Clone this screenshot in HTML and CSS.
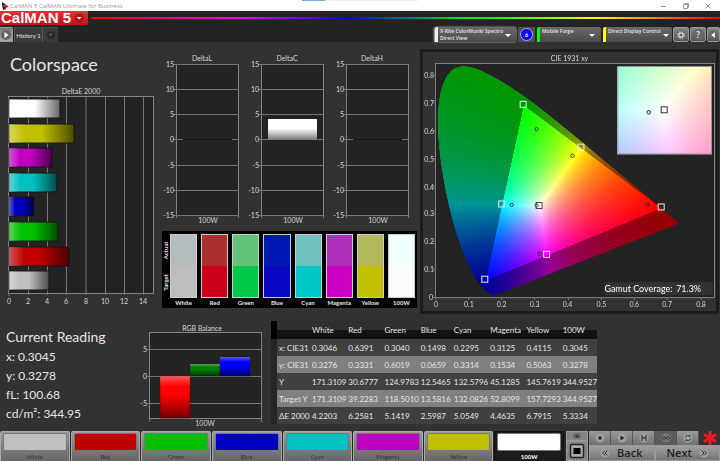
FILE: index.html
```html
<!DOCTYPE html>
<html lang="en">
<head>
    <meta charset="UTF-8">
    <meta name="viewport" content="width=device-width, initial-scale=1.0">
    <title>CalMAN 5 CalMAN Ultimate for Business</title>
    <link rel="stylesheet" href="styles.css">
</head>
<body>

    <div class="titlebar">
        <svg class="app-icon" viewBox="0 0 8 8"><path d="M1 0l3 2-1 2-2-1z" fill="#222"/><path d="M4 2l4 3-4 1-1-2z" fill="#c11"/><path d="M1 3l3 2 1 2-3 1z" fill="#222"/></svg>
        <span class="title">CalMAN 5 CalMAN Ultimate for Business</span>
        <span class="load"></span>
        <div class="win-buttons">
            <button aria-label="Minimize"><svg viewBox="0 0 6 6"><path d="M0 3.5h5"/></svg></button>
            <button aria-label="Restore"><svg viewBox="0 0 6 6"><path d="M.5 1.5h4v4h-4zM1.5 1.5v-1h4v4h-1"/></svg></button>
            <button aria-label="Close"><svg viewBox="0 0 6 6"><path d="M.5.5l5 5M5.5.5l-5 5"/></svg></button>
        </div>
    </div>

    <header>
        <div class="brand-row">
            <button class="brand">CalMAN 5
                <svg viewBox="0 0 10 10"><circle cx="5" cy="5" r="4.5" fill="#b5121a"/><path d="M2.5 4h5L5 6.5z" fill="#fff"/></svg>
            </button>
            <div class="rainbow"></div>
        </div>
        <div class="tab-row">
            <button class="play" aria-label="Play"><svg viewBox="0 0 12 12"><circle cx="6" cy="6" r="5" fill="#666"/><path d="M4.5 3l4 3-4 3z" fill="#fff"/></svg></button>
            <button class="tab">History 1</button>
            <button class="tab add"><span>+</span></button>
            <div class="devices">
                <button class="device meter"><span>X-Rite ColorMunki Spectro<br>Direct View</span><i></i></button>
                <button class="badge" aria-label="Six"><b>6</b></button>
                <button class="device source"><span>Mobile Forge</span><i></i></button>
                <button class="device display"><span>Direct Display Control</span><i></i></button>
                <button class="tool" aria-label="Settings"><svg viewBox="0 0 12 12"><circle cx="6" cy="6" r="5" fill="#666"/><circle cx="6" cy="6" r="2.2" fill="none" stroke="#ddd" stroke-width="1.2"/><circle cx="6" cy="6" r="3.4" fill="none" stroke="#ddd" stroke-dasharray="1.3 1.4"/></svg></button>
                <button class="tool" aria-label="Help"><b>?</b></button>
                <button class="tool last" aria-label="Collapse"><svg viewBox="0 0 12 12"><circle cx="6" cy="6" r="5" fill="#666"/><path d="M7.5 3l-4 3 4 3z" fill="#fff"/></svg></button>
            </div>
        </div>
    </header>

    <main>
        <div class="top">
            <section class="delta-e">
                <h1>Colorspace</h1>
                <svg viewBox="0 0 160 225">
                    <defs>
                        <linearGradient id="tube">
                            <stop offset="0" stop-color="#fff" stop-opacity=".35"/>
                            <stop offset=".25" stop-color="#fff" stop-opacity="0"/>
                            <stop offset=".5" stop-color="#000" stop-opacity="0"/>
                            <stop offset="1" stop-color="#000" stop-opacity=".6"/>
                        </linearGradient>
                    </defs>
                    <text x="81" y="9" class="mid">DeltaE 2000</text>
                    <rect x="8.5" y="11.5" width="145" height="197" class="plot"/>
                    <path class="grid" d="M28.5 12v198M47.5 12v198M66.5 12v198M86 12v198M105.5 12v198M124.5 12v198M143.5 12v198M9 208v3"/>
                    <g class="bars">
                        <rect x="9" y="14" width="51" height="19" fill="#fff"/>
                        <rect x="9" y="39" width="65" height="19" fill="#c0c000"/>
                        <rect x="9" y="63" width="43" height="19" fill="#c000c0"/>
                        <rect x="9" y="88" width="48" height="19" fill="#00c0c0"/>
                        <rect x="9" y="112" width="25" height="19" fill="#0000c0"/>
                        <rect x="9" y="137" width="49" height="19" fill="#00c000"/>
                        <rect x="9" y="162" width="60" height="19" fill="#c00000"/>
                        <rect x="9" y="186" width="40" height="19" fill="#c0c0c0"/>
                    </g>
                    <g fill="url(#tube)">
                        <rect x="9" y="14" width="51" height="19"/>
                        <rect x="9" y="39" width="65" height="19"/>
                        <rect x="9" y="63" width="43" height="19"/>
                        <rect x="9" y="88" width="48" height="19"/>
                        <rect x="9" y="112" width="25" height="19"/>
                        <rect x="9" y="137" width="49" height="19"/>
                        <rect x="9" y="162" width="60" height="19"/>
                        <rect x="9" y="186" width="40" height="19"/>
                    </g>
                    <g class="mid">
                        <text x="9" y="219">0</text><text x="28" y="219">2</text><text x="47" y="219">4</text><text x="66" y="219">6</text>
                        <text x="86" y="219">8</text><text x="105" y="219">10</text><text x="124" y="219">12</text><text x="143" y="219">14</text>
                    </g>
                </svg>
            </section>

            <section class="center">
                <svg viewBox="0 0 260 177">
                    <defs>
                        <linearGradient id="fade" x2="0" y2="1">
                            <stop offset=".45" stop-color="#fff"/>
                            <stop offset="1" stop-color="#777"/>
                        </linearGradient>
                        <g id="axes">
                            <rect x="16.5" y="14.5" width="62" height="151" class="plot"/>
                            <path class="grid" d="M13 14.5h66M13 39.5h66M13 64.5h66M13 89.5h10M72 89.5h7M13 115.5h66M13 140.5h66M13 165.5h66M16.5 165v3M78.5 165v3"/>
                            <path d="M23 89.5h49" stroke="#151515"/>
                            <g class="end">
                                <text x="14" y="17">15</text><text x="14" y="42">10</text><text x="14" y="67">5</text><text x="14" y="92">0</text>
                                <text x="14" y="118">-5</text><text x="14" y="143">-10</text><text x="14" y="168">-15</text>
                            </g>
                            <text x="48" y="173" class="mid">100W</text>
                        </g>
                    </defs>
                    <use href="#axes"/>
                    <use href="#axes" x="85"/>
                    <use href="#axes" x="170"/>
                    <rect x="108" y="69" width="49" height="21" fill="url(#fade)"/>
                    <g class="mid"><text x="42" y="11">DeltaL</text><text x="127" y="11">DeltaC</text><text x="212" y="11">DeltaH</text></g>
                </svg>
                <div class="swatches">
                    <div class="side"><span>Actual</span><span>Target</span></div>
                    <figure class="s-white"><div></div><figcaption>White</figcaption></figure>
                    <figure class="s-red"><div></div><figcaption>Red</figcaption></figure>
                    <figure class="s-green"><div></div><figcaption>Green</figcaption></figure>
                    <figure class="s-blue"><div></div><figcaption>Blue</figcaption></figure>
                    <figure class="s-cyan"><div></div><figcaption>Cyan</figcaption></figure>
                    <figure class="s-magenta"><div></div><figcaption>Magenta</figcaption></figure>
                    <figure class="s-yellow"><div></div><figcaption>Yellow</figcaption></figure>
                    <figure class="s-100w"><div></div><figcaption>100W</figcaption></figure>
                </div>
            </section>

            <section class="cie">
                <canvas id="gamut" width="882" height="780"></canvas>
                <svg viewBox="0 0 294 260">
                    <text x="147" y="9" class="mid">CIE 1931 xy</text>
                    <rect x="12.5" y="11.5" width="280" height="235" fill="none" stroke="#858585"/>
                    <path class="grid" d="M10 23h3M10 51h3M10 79h3M10 107h3M10 135h3M10 162.5h3M10 190.5h3M10 218.5h3M10 246.5h3M13 246v3M46 246v3M79 246v3M112 246v3M146 246v3M179 246v3M212 246v3M245 246v3M279 246v3"/>
                    <g class="end">
                        <text x="11" y="26">0.8</text><text x="11" y="54">0.7</text><text x="11" y="82">0.6</text><text x="11" y="110">0.5</text>
                        <text x="11" y="138">0.4</text><text x="11" y="165">0.3</text><text x="11" y="193">0.2</text><text x="11" y="221">0.1</text><text x="10" y="249">0</text>
                    </g>
                    <g class="mid">
                        <text x="13" y="256">0</text><text x="46" y="256">0.1</text><text x="79" y="256">0.2</text><text x="112" y="256">0.3</text><text x="145" y="256">0.4</text>
                        <text x="179" y="256">0.5</text><text x="212" y="256">0.6</text><text x="245" y="256">0.7</text><text x="279" y="256">0.8</text>
                    </g>
                    <g class="target">
                        <rect x="97.5" y="49.500" width="6" height="6"/>
                        <rect x="155.5" y="92.500" width="6" height="6"/>
                        <rect x="76" y="149.500" width="6" height="6"/>
                        <rect x="236" y="152.500" width="6" height="6"/>
                        <rect x="121" y="200" width="6" height="6"/>
                        <rect x="59" y="225" width="6" height="6"/>
                    </g>
                    <rect x="113.500" y="151" width="6" height="6" fill="#fff" stroke="#444"/>
                    <g class="measured">
                        <circle cx="114" cy="77.5" r="1.7"/>
                        <circle cx="150" cy="104" r="1.7"/>
                        <circle cx="89" cy="153.5" r="1.7"/>
                        <circle cx="114" cy="154" r="1.7" fill="#ccc"/>
                        <circle cx="225.5" cy="153" r="1.7"/>
                        <circle cx="117" cy="202.5" r="1.7"/>
                    </g>
                    <rect x="195.5" y="14.5" width="94" height="88" fill="none" stroke="#999"/>
                    <rect x="239" y="55" width="6" height="6" fill="#fff" stroke="#333"/>
                    <circle cx="226.5" cy="60.5" r="1.8" fill="#ddd" stroke="#333"/>
                    <rect x="182" y="231" width="109" height="13" fill="#323232"/>
                    <text x="182" y="241" class="coverage">Gamut Coverage:</text>
                    <text x="254" y="241" class="coverage">71.3%</text>
                </svg>
            </section>
        </div>

        <div class="bottom">
            <section class="reading">
                <h2>Current Reading</h2>
                <p>x: 0.3045</p>
                <p>y: 0.3278</p>
                <p>fL: 100.68</p>
                <p>cd/m²: 344.95</p>
            </section>

            <section class="balance">
                <svg viewBox="0 0 125 108">
                    <defs>
                        <linearGradient id="block" x2="0" y2="1">
                            <stop offset="0" stop-color="#fff" stop-opacity=".35"/>
                            <stop offset=".25" stop-color="#fff" stop-opacity="0"/>
                            <stop offset=".45" stop-color="#000" stop-opacity="0"/>
                            <stop offset="1" stop-color="#000" stop-opacity=".55"/>
                        </linearGradient>
                    </defs>
                    <text x="57" y="8" class="mid">RGB Balance</text>
                    <rect x="4.5" y="9.5" width="112" height="86" class="plot"/>
                    <path class="grid" d="M2 26.5h115M2 53.5h115M2 80.5h115M4.5 96v3M116.5 96v3"/>
                    <g stroke="#222" stroke-width=".5">
                        <rect x="15" y="53" width="30" height="42" fill="#f00"/>
                        <rect x="45" y="41" width="30" height="12" fill="#008000"/>
                        <rect x="75" y="34" width="30" height="19" fill="#00f"/>
                    </g>
                    <g fill="url(#block)"><rect x="15" y="53" width="30" height="42"/><rect x="45" y="41" width="30" height="12"/><rect x="75" y="34" width="30" height="19"/></g>
                    <g class="end"><text x="2" y="29">5</text><text x="2" y="56">0</text><text x="2" y="83">-5</text></g>
                    <text x="60" y="103" class="mid">100W</text>
                </svg>
            </section>

            <section class="readings">
                <table>
                    <thead>
                        <tr><th class="gutter"></th><th class="label"></th><th>White</th><th>Red</th><th>Green</th><th class="narrow">Blue</th><th>Cyan</th><th>Magenta</th><th>Yellow</th><th>100W</th></tr>
                    </thead>
                    <tbody>
                        <tr><td class="gutter"></td><th>x: CIE31</th><td>0.3046</td><td>0.6391</td><td>0.3040</td><td>0.1498</td><td>0.2295</td><td>0.3125</td><td>0.4115</td><td>0.3045</td></tr>
                        <tr><td class="gutter"></td><th>y: CIE31</th><td>0.3276</td><td>0.3331</td><td>0.6019</td><td>0.0659</td><td>0.3314</td><td>0.1534</td><td>0.5063</td><td>0.3278</td></tr>
                        <tr><td class="gutter"></td><th>Y</th><td>171.3109</td><td>30.6777</td><td>124.9783</td><td>12.5465</td><td>132.5796</td><td>45.1285</td><td>145.7619</td><td>344.9527</td></tr>
                        <tr><td class="gutter"></td><th>Target Y</th><td>171.3109</td><td>39.2283</td><td>118.5010</td><td>13.5816</td><td>132.0826</td><td>52.8099</td><td>157.7293</td><td>344.9527</td></tr>
                        <tr><td class="gutter"></td><th>ΔE 2000</th><td>4.2203</td><td>6.2581</td><td>5.1419</td><td>2.5987</td><td>5.0549</td><td>4.4635</td><td>6.7915</td><td>5.3334</td></tr>
                    </tbody>
                </table>
            </section>
        </div>
    </main>

    <footer>
        <div class="patches">
            <button class="p-white"><i></i>White</button>
            <button class="p-red"><i></i>Red</button>
            <button class="p-green"><i></i>Green</button>
            <button class="p-blue"><i></i>Blue</button>
            <button class="p-cyan"><i></i>Cyan</button>
            <button class="p-magenta"><i></i>Magenta</button>
            <button class="p-yellow"><i></i>Yellow</button>
            <button class="p-100w active"><i></i>100W</button>
        </div>
        <div class="window-tools">
            <button aria-label="Expand"><svg viewBox="0 0 10 8"><ellipse cx="5" cy="4" rx="4" ry="3" fill="#666"/><path d="M3 5L5 3 7 5z" fill="#222"/></svg></button>
            <button aria-label="Pattern window"><svg viewBox="0 0 16 16"><rect x="1.5" y="1.5" width="13" height="13" rx="1" fill="#aaa" stroke="#222" stroke-width="1.5"/><rect x="4.5" y="5" width="7" height="6"/></svg></button>
        </div>
        <div class="transport">
            <div class="controls">
                <button aria-label="Stop"><svg viewBox="0 0 10 10"><circle cx="5" cy="5" r="4.5"/><path d="M3.5 3.5h3v3h-3z"/></svg></button>
                <button aria-label="Read"><svg viewBox="0 0 10 10"><circle cx="5" cy="5" r="4.5"/><path d="M3.5 2.5L7.5 5l-4 2.5z"/></svg></button>
                <button aria-label="Read series"><svg viewBox="0 0 10 10"><circle cx="5" cy="5" r="4.5"/><path d="M2.5 2h1v6h-1zM6.5 2h1v6h-1zM3.5 4.5h3v1h-3z"/></svg></button>
                <button class="on" aria-label="Read continuous"><svg viewBox="0 0 10 10"><circle cx="5" cy="5" r="4.5"/><path class="line" d="M5 5C3.5 3 1.5 3.500 1.5 5s2 2 3.500 0 3.500-1.500 3.500 0-2 2-3.500 0z"/></svg></button>
                <button aria-label="Refresh"><svg viewBox="0 0 10 10"><circle cx="5" cy="5" r="4.5"/><path class="line" d="M2.5 4.5a2.5 2.5 0 0 1 4.5-1V2M7.5 5.5a2.5 2.5 0 0 1-4.5 1V8"/></svg></button>
                <svg class="star" viewBox="0 0 14 14"><path d="M7 0v14M1 3.5l12 7M13 3.5l-12 7"/></svg>
            </div>
            <div class="nav">
                <button><svg viewBox="0 0 10 10"><circle cx="5" cy="5" r="4.5"/><path class="line" d="M5 2.5L2.5 5 5 7.5M7.5 2.5L5 5l2.5 2.5"/></svg>Back</button>
                <button>Next<svg viewBox="0 0 10 10"><circle cx="5" cy="5" r="4.5"/><path class="line" d="M5 2.5L7.5 5 5 7.5M2.5 2.5L5 5 2.5 7.5"/></svg></button>
            </div>
        </div>
    </footer>

    <script src="gamut.js"></script>
</body>
</html>
```
FILE: styles.css
```css
* {
    box-sizing: border-box;
}
body {
    margin: 0;
    min-height: 100vh;
    display: flex;
    flex-direction: column;
    background: #323232;
    color: #e6e6e6;
    font-family: Lato, sans-serif;
    font-size: 8px;
}
button {
    font-family: inherit;
    font-size: 7px;
    color: inherit;
    border: none;
    padding: 0;
    cursor: pointer;
}
svg {
    display: block;
}

/* window title */
.titlebar {
    height: 11px;
    background: #fff;
    color: #999;
    display: flex;
    align-items: center;
    padding: 0 9px 0 1px;
    font-family: "Open Sans", sans-serif;
    font-size: 6px;
    position: relative;
}
.app-icon {
    width: 8px;
    height: 8px;
    margin-right: 1px;
}
.load {
    position: absolute;
    left: 42%;
    top: 0;
    width: 16%;
    height: 1px;
    background: linear-gradient(90deg, #7aaae0 20%, #eee 20%);
}
.win-buttons {
    margin-left: auto;
    display: flex;
    gap: 16px;
}
.win-buttons button {
    background: none;
}
.win-buttons svg {
    width: 6px;
    height: 6px;
    fill: none;
    stroke: #999;
}

/* header */
header {
    height: 31px;
    background: #232323;
    display: flex;
    flex-direction: column;
    justify-content: space-between;
}
.brand-row {
    display: flex;
    align-items: flex-start;
    height: 14px;
}
.brand {
    width: 88px;
    height: 14px;
    background: linear-gradient(#e33138, #c4121a);
    border-radius: 0 0 2px 0;
    color: #fff;
    font: bold 15px/12px "Liberation Sans", sans-serif;
    display: flex;
    align-items: center;
    justify-content: space-between;
    padding: 0 4px 1px 1px;
    white-space: nowrap;
}
.brand svg {
    width: 10px;
    height: 10px;
}
.rainbow {
    flex: 1;
    height: 2px;
    margin: 6px 0 0 3px;
    background: linear-gradient(90deg, #f00, #f0f 24%, #00f 41%, #00e020 58%, #0f0 64%, #ff0 80%, #f00);
}
.tab-row {
    display: flex;
    height: 15px;
}
.play {
    width: 13px;
    background: linear-gradient(#777, #aaa);
    border: 1px solid #999;
    border-left: 0;
    border-radius: 0 2px 0 0;
}
.play svg {
    width: 12px;
    height: 12px;
}
.tab {
    width: 28px;
    background: #3a3a3a;
    border-left: 1px solid #555;
    border-top: 1px solid #4a4a4a;
    margin-left: 1px;
    white-space: nowrap;
    font-size: 6px;
}
.tab.add {
    width: 16px;
    margin: 0;
    color: #888;
}
.tab.add span {
    display: block;
    width: 8px;
    line-height: 8px;
    margin: auto;
    background: #2a2a2a;
    border-radius: 50%;
}
.devices {
    margin-left: auto;
    display: flex;
    gap: 1px;
}
.device {
    display: flex;
    justify-content: space-between;
    align-items: flex-start;
    text-align: left;
    background: linear-gradient(#6a6a6a, #4a4a4a);
    border-left: 3px solid #eee;
    border-radius: 2px 2px 0 0;
    padding: 1px 6px 0 2px;
    font-family: "Open Sans", sans-serif;
    font-size: 5px;
    font-weight: 600;
    line-height: 7px;
    white-space: nowrap;
}
.device i {
    align-self: center;
    border: 3px solid transparent;
    border-top-color: #fff;
    border-bottom: 0;
}
.meter {
    width: 82px;
    box-shadow: -1px 0 2px #ccc;
}
.source {
    width: 64px;
    border-left-color: #0f0;
    margin-left: 1px;
}
.display {
    width: 69px;
    border-left-color: #ff0;
    margin-left: 1px;
    padding-right: 3px;
}
.badge {
    width: 17px;
    background: #505050;
}
.badge b {
    display: block;
    width: 13px;
    margin: auto;
    line-height: 11px;
    border: 1px solid #aac;
    border-radius: 50%;
    background: #00f;
    color: #fff;
    font-size: 6px;
}
.tool {
    width: 16px;
    background: linear-gradient(#888, #555);
    border: 1px solid #999;
    border-radius: 2px;
}
.tool.last {
    width: 13px;
}
.tool svg {
    width: 12px;
    height: 12px;
    margin: auto;
}
.tool.last svg {
    width: 11px;
}
.tool b {
    display: block;
    width: 11px;
    margin: auto;
    line-height: 11px;
    background: #666;
    border-radius: 50%;
    font-size: 9px;
}

/* charts */
main {
    flex: 1;
}
main svg {
    width: 100%;
    overflow: visible;
    font-size: 7px;
    fill: #d6d6d6;
}
.mid {
    text-anchor: middle;
}
.end {
    text-anchor: end;
}
.plot {
    fill: #232323;
    stroke: #858585;
}
.grid {
    fill: none;
    stroke: #767676;
}
.bars {
    stroke: #1a1a1a;
}
.top {
    display: grid;
    grid-template-columns: 160fr 260fr 300fr;
}
h1, h2 {
    margin: 0;
    font-weight: normal;
    white-space: nowrap;
}
h1 {
    font-size: 18px;
    line-height: 24px;
    padding: 10px 0 9px 10px;
}
.center {
    padding-top: 8px;
}
.swatches {
    display: flex;
    gap: 4px;
    height: 77px;
    background: #000;
    margin: 4px 3px 0 2px;
    padding: 3px 2px 0 1px;
    font-weight: bold;
    font-size: 6px;
}
.side {
    width: 6px;
    margin-right: -3px;
    height: 64px;
    display: flex;
    flex-direction: column;
    justify-content: space-around;
}
.side span {
    writing-mode: vertical-rl;
    transform: rotate(180deg);
    line-height: 6px;
    text-align: center;
}
.swatches figure {
    flex: 1;
    min-width: 0;
    margin: 0;
    text-align: center;
}
.swatches figure div {
    height: 64px;
    border: 1px solid #ccc;
}
.swatches figcaption {
    line-height: 9px;
}
.s-white div { background: linear-gradient(#b3bcbf 50%, #bdbdbd 50%); }
.s-red div { background: linear-gradient(#ad3030 50%, #cc001b 50%); }
.s-green div { background: linear-gradient(#62c478 50%, #00c848 50%); }
.s-blue div { background: linear-gradient(#0019b5 50%, #0909c4 50%); }
.s-cyan div { background: linear-gradient(#70c0bd 50%, #00c8c8 50%); }
.s-magenta div { background: linear-gradient(#b02dba 50%, #cc00c4 50%); }
.s-yellow div { background: linear-gradient(#b3b95a 50%, #c0c000 50%); }
.s-100w div { background: linear-gradient(#f2ffff 50%, #fcfcfc 50%); }

.cie {
    display: grid;
    margin: 7px 1px 0 0;
    border: 3px solid #1c1c1c;
    align-self: start;
}
.cie canvas, .cie svg {
    grid-area: 1 / 1;
    width: 100%;
}
.target rect {
    fill: none;
    stroke: #eee;
}
.measured circle {
    fill: none;
    stroke: #222;
    stroke-opacity: 0.8;
}
.cie .coverage {
    font-size: 9px;
    fill: #fff;
}

/* readings */
.bottom {
    display: grid;
    grid-template-columns: 145fr 125fr 327fr 123fr;
}
.reading {
    padding: 13px 0 0 6px;
}
h2 {
    font-size: 14px;
    line-height: 20px;
}
.reading p {
    margin: 0;
    font-size: 12px;
    line-height: 19px;
    white-space: nowrap;
}
.balance {
    padding-top: 9px;
}
.readings {
    padding: 7px 0 0 1px;
}
table {
    width: 100%;
    table-layout: fixed;
    border-collapse: collapse;
    background: #404040;
    font-size: 8px;
    white-space: nowrap;
}
th, td {
    height: 17px;
    padding: 0 0 0 2px;
    text-align: left;
    font-weight: normal;
}
thead th {
    height: 18px;
    background: linear-gradient(#303030 50%, #121212 50%);
}
.gutter {
    width: 6px;
    background: #262626;
    padding: 0;
}
thead .gutter {
    background: #000;
}
.label {
    width: 33px;
}
.narrow {
    width: 33px;
}
tbody tr:nth-child(even) {
    background: #808080;
}

/* bottom bar */
footer {
    height: 30px;
    display: flex;
    background: #262626;
}
.patches {
    flex: 1;
    display: flex;
    gap: 1px;
}
.patches button {
    flex: 1;
    background: linear-gradient(#999, #666);
    border: 1px solid #aaa;
    border-bottom: 0;
    border-radius: 2px 2px 0 0;
    padding: 1px 2px 0;
    color: #333;
    font-size: 6px;
    line-height: 8px;
}
.patches i {
    display: block;
    height: 18px;
    border-radius: 2px;
    border: 1px solid #777;
    margin-bottom: 2px;
}
.patches .active {
    background: #1c1c1c;
    border-color: #111;
    color: #fff;
    font-weight: bold;
}
.p-white i { background: #c0c0c0; }
.p-red i { background: #c00000; }
.p-green i { background: #00c000; }
.p-blue i { background: #0000c0; }
.p-cyan i { background: #00c0c0; }
.p-magenta i { background: #c000c0; }
.p-yellow i { background: #c0c000; }
.p-100w i { background: #fff; }
.window-tools {
    width: 22px;
    margin: 0 1px 0 2px;
    display: flex;
    flex-direction: column;
}
.window-tools button {
    background: #858585;
    border: 1px solid #999;
    height: 10px;
}
.window-tools button + button {
    height: 20px;
}
.window-tools svg {
    width: 16px;
    height: 16px;
    margin: auto;
}
.window-tools button:first-child svg {
    height: 8px;
}
.transport {
    width: 131px;
    display: flex;
    flex-direction: column;
}
.controls {
    display: flex;
    height: 14px;
    background: #323232;
}
.controls button {
    width: 22px;
    background: linear-gradient(#999, #707070);
    border-right: 1px solid #555;
}
.controls .on {
    background: #5c5c5c;
}
.transport svg {
    width: 10px;
    height: 10px;
    margin: auto;
    fill: #222;
}
.transport circle {
    fill: #a0a0a0;
}
.transport .on circle {
    fill: #777;
}
.transport .line {
    fill: none;
    stroke: #333;
}
.controls .star {
    width: 14px;
    height: 14px;
    margin: 0 auto;
    stroke: #f01820;
    stroke-width: 3;
}
.nav {
    flex: 1;
    display: flex;
}
.nav button {
    flex: 1;
    display: flex;
    align-items: center;
    background: linear-gradient(#a0a0a0, #747474);
    border: 1px solid #999;
    color: #222;
    font-family: "Open Sans", sans-serif;
    font-size: 11px;
    font-weight: 600;
    line-height: 14px;
    padding: 0 11px 0 3px;
}
.nav button + button {
    padding: 0 3px 0 11px;
}
```
FILE: gamut.js
```js
// spectral locus, CIE 1931 2 degree observer
const locus = [
    [.1741, .005], [.1714, .0051], [.1644, .0109], [.1566, .0177], [.144, .0297], [.1241, .0578],
    [.1096, .0868], [.0913, .1327], [.0687, .2007], [.0454, .295], [.0235, .4127], [.0082, .5384],
    [.0039, .6548], [.0139, .7502], [.0389, .812], [.0743, .8338], [.1142, .8262], [.1547, .8059],
    [.2296, .7543], [.3016, .6923], [.3731, .6245], [.4441, .5547], [.5125, .4866], [.5752, .4242],
    [.627, .3725], [.6915, .3083], [.719, .2809], [.7347, .2653]
];
const R = [.68, .32], G = [.265, .69], B = [.15, .06], W = [.3127, .329];

// barycentric weights of a point in the R G B triangle
function weights(x, y) {
    const d = (G[1] - B[1]) * (R[0] - B[0]) + (B[0] - G[0]) * (R[1] - B[1]);
    const r = ((G[1] - B[1]) * (x - B[0]) + (B[0] - G[0]) * (y - B[1])) / d;
    const g = ((B[1] - R[1]) * (x - B[0]) + (R[0] - B[0]) * (y - B[1])) / d;
    return [r, g, 1 - r - g];
}
const white = weights(W[0], W[1]);

function paint(w, h, x0, x1, y0, y1) {
    const c = document.createElement("canvas");
    c.width = w;
    c.height = h;
    const ctx = c.getContext("2d");
    const img = ctx.createImageData(w, h);
    for (let j = 0; j < h; j++) {
        for (let i = 0; i < w; i++) {
            const rgb = weights(x0 + (x1 - x0) * i / w, y1 - (y1 - y0) * j / h).map((v, k) => v / white[k]);
            const max = Math.max(...rgb);
            const level = Math.min(...rgb) < 0 ? 150 : 255;
            const p = (j * w + i) * 4;
            for (let k = 0; k < 3; k++) {
                img.data[p + k] = level * Math.max(0, rgb[k] / max);
            }
            img.data[p + 3] = 255;
        }
    }
    ctx.putImageData(img, 0, 0);
    return c;
}

const ctx = document.getElementById("gamut").getContext("2d");
ctx.scale(3, 3);
ctx.fillStyle = "#323232";
ctx.fillRect(0, 0, 294, 260);
ctx.fillStyle = "#232323";
ctx.fillRect(13, 12, 279, 234);
ctx.drawImage(paint(282, 261, .288, .338, .301, .357), 195, 15, 94, 87);

// smooth outline through the midpoints of the locus
const pts = locus.map(p => [13 + p[0] * 332.5, 246 - p[1] * 279]);
ctx.beginPath();
ctx.moveTo(pts[0][0], pts[0][1]);
for (let i = 1; i < pts.length - 1; i++) {
    const a = pts[i], b = pts[i + 1];
    ctx.quadraticCurveTo(a[0], a[1], (a[0] + b[0]) / 2, (a[1] + b[1]) / 2);
}
ctx.lineTo(pts[pts.length - 1][0], pts[pts.length - 1][1]);
ctx.closePath();
ctx.clip();
ctx.drawImage(paint(798, 711, 0, .8, 0, .85), 13, 246 - .85 * 279, 266, .85 * 279);
```
